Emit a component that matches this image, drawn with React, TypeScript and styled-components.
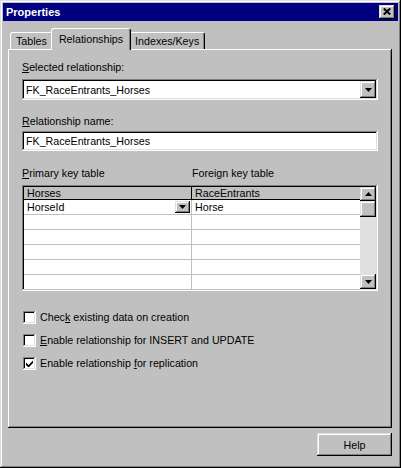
import React from 'react';
import styled, { createGlobalStyle } from 'styled-components';

const GlobalStyle = createGlobalStyle`
  html, body {
    margin: 0;
    padding: 0;
    background: #c0c0c0;
  }
  body {
    font-family: "Liberation Sans", Arial, sans-serif;
    font-size: 10.7px;
    color: #000;
  }
`;

const raised = `
  box-shadow: inset -1px -1px #000, inset 1px 1px #dfdfdf,
    inset -2px -2px #808080, inset 2px 2px #fff;
`;

const sunken = `
  box-shadow: inset -1px -1px #fff, inset 1px 1px #808080,
    inset -2px -2px #dfdfdf, inset 2px 2px #000;
`;

const Window = styled.div`
  width: 401px;
  height: 468px;
  box-sizing: border-box;
  padding: 3px;
  background: #c0c0c0;
  display: flex;
  flex-direction: column;
  ${raised}
`;

const TitleBar = styled.div`
  height: 18px;
  flex-shrink: 0;
  background: #000080;
  display: flex;
  align-items: center;
  justify-content: space-between;
  padding: 0 3px 0 3px;
`;

const Title = styled.span`
  color: #fff;
  font-weight: bold;
  font-size: 11px;
`;

const CloseButton = styled.div`
  width: 16px;
  height: 14px;
  box-sizing: border-box;
  background: #c0c0c0;
  display: flex;
  align-items: center;
  justify-content: center;
  padding: 0 1px 1px 0;
  ${raised}
`;

const Body = styled.div`
  flex: 1;
  min-height: 0;
  display: flex;
  flex-direction: column;
  padding: 7px 6px 0 5px;
`;

const TabRow = styled.div`
  position: relative;
  z-index: 1;
  height: 22px;
  display: flex;
  align-items: flex-end;
  padding-left: 2px;
  margin-bottom: -1px;
`;

const Tab = styled.div<{ $active?: boolean }>`
  height: ${p => (p.$active ? 22 : 17)}px;
  margin: ${p => (p.$active ? '0 -2px' : '0 0 1px')};
  padding: ${p => (p.$active ? '0 7px 2px' : '0 5px')};
  position: relative;
  z-index: ${p => (p.$active ? 2 : 1)};
  box-sizing: border-box;
  display: flex;
  align-items: center;
  background: #c0c0c0;
  border-top: 1px solid #fff;
  border-left: 1px solid #fff;
  border-right: 1px solid #000;
  border-radius: 3px 3px 0 0;
  box-shadow: inset -1px 0 #808080;
  white-space: nowrap;
`;

const Panel = styled.div`
  flex: 1;
  display: flex;
  flex-direction: column;
  padding: 12px 14px 0;
  box-shadow: inset -1px -1px #000, inset 1px 1px #fff, inset -2px -2px #808080;
`;

const FieldLabel = styled.div<{ $gap?: number }>`
  line-height: 13px;
  margin-top: ${p => p.$gap ?? 0}px;
  white-space: nowrap;
`;

const Combo = styled.div`
  margin-top: 5px;
  height: 21px;
  box-sizing: border-box;
  padding: 2px;
  background: #fff;
  display: flex;
  align-items: center;
  ${sunken}
`;

const FieldText = styled.span<{ $inset?: number }>`
  flex: 1;
  padding-left: ${p => p.$inset ?? 2}px;
  white-space: nowrap;
`;

const DropButton = styled.div<{ $w: number; $h: number }>`
  width: ${p => p.$w}px;
  height: ${p => p.$h}px;
  flex-shrink: 0;
  box-sizing: border-box;
  background: #c0c0c0;
  display: flex;
  align-items: center;
  justify-content: center;
  ${raised}
`;

const TextInput = styled.div`
  margin-top: 3px;
  height: 20px;
  box-sizing: border-box;
  padding: 0 4px;
  background: #fff;
  display: flex;
  align-items: center;
  white-space: nowrap;
  ${sunken}
`;

const ColumnLabels = styled.div`
  margin-top: 16px;
  display: grid;
  grid-template-columns: 170px 1fr;
  line-height: 13px;
`;

const GridFrame = styled.div`
  margin-top: 5px;
  height: 106px;
  box-sizing: border-box;
  padding: 2px;
  background: #fff;
  display: flex;
  overflow: hidden;
  ${sunken}
`;

const Table = styled.div`
  flex: 1;
  display: flex;
  flex-direction: column;
`;

const HeaderRow = styled.div`
  display: grid;
  grid-template-columns: 168px 1fr;
  height: 13px;
  box-sizing: border-box;
  background: #c0c0c0;
  border-bottom: 1px solid #000;
  flex-shrink: 0;
`;

const HeaderCell = styled.div<{ $divider?: boolean }>`
  padding-left: 3px;
  line-height: 13px;
  border-right: ${p => (p.$divider ? '1px solid #000' : 'none')};
  white-space: nowrap;
  overflow: hidden;
`;

const Row = styled.div`
  display: grid;
  grid-template-columns: 168px 1fr;
  height: 15px;
  box-sizing: border-box;
  border-bottom: 1px solid #c0c0c0;
  flex-shrink: 0;
`;

const Cell = styled.div<{ $divider?: boolean }>`
  display: flex;
  align-items: center;
  padding-left: 3px;
  padding-right: 1px;
  border-right: ${p => (p.$divider ? '1px solid #c0c0c0' : 'none')};
  white-space: nowrap;
  overflow: hidden;
`;

const Scrollbar = styled.div`
  width: 16px;
  flex-shrink: 0;
  display: flex;
  flex-direction: column;
  background: #e0e0e0;
`;

const ScrollPart = styled.div<{ $h: number }>`
  height: ${p => p.$h}px;
  flex-shrink: 0;
  box-sizing: border-box;
  background: #c0c0c0;
  display: flex;
  align-items: center;
  justify-content: center;
  ${raised}
`;

const Track = styled.div`
  flex: 1;
`;

const CheckRow = styled.div<{ $gap: number }>`
  margin-top: ${p => p.$gap}px;
  display: flex;
  align-items: center;
  gap: 4px;
  line-height: 13px;
  white-space: nowrap;
`;

const CheckBox = styled.div`
  width: 13px;
  height: 13px;
  margin-left: 1px;
  box-sizing: border-box;
  background: #fff;
  display: flex;
  align-items: center;
  justify-content: center;
  ${sunken}
`;

const Footer = styled.div`
  display: flex;
  justify-content: flex-end;
  padding: 5px 0 9px;
`;

const PushButton = styled.div`
  width: 75px;
  height: 23px;
  box-sizing: border-box;
  background: #c0c0c0;
  display: flex;
  align-items: center;
  justify-content: center;
  ${raised}
`;

const ArrowDown = () => (
  <svg width="7" height="4" viewBox="0 0 7 4">
    <path d="M0 0h7L3.5 4z" fill="#000" />
  </svg>
);

const ArrowUp = () => (
  <svg width="7" height="4" viewBox="0 0 7 4">
    <path d="M3.5 0L7 4H0z" fill="#000" />
  </svg>
);

const CloseGlyph = () => (
  <svg width="8" height="7" viewBox="0 0 8 7">
    <path d="M0.8 0.5L7.2 6.5M7.2 0.5L0.8 6.5" stroke="#000" strokeWidth="2" />
  </svg>
);

const CheckGlyph = () => (
  <svg width="7" height="7" viewBox="0 0 7 7">
    <path d="M0 2.5L2.5 5L7 0.5V3L2.5 7.5L0 5z" fill="#000" />
  </svg>
);

const emptyRows = [1, 2, 3, 4, 5];

export default function App() {
  return (
    <>
      <GlobalStyle />
      <Window>
        <TitleBar>
          <Title>Properties</Title>
          <CloseButton>
            <CloseGlyph />
          </CloseButton>
        </TitleBar>
        <Body>
          <TabRow>
            <Tab>Tables</Tab>
            <Tab $active>Relationships</Tab>
            <Tab>Indexes/Keys</Tab>
          </TabRow>
          <Panel>
            <FieldLabel>
              <u>S</u>elected relationship:
            </FieldLabel>
            <Combo>
              <FieldText>FK_RaceEntrants_Horses</FieldText>
              <DropButton $w={16} $h={17}>
                <ArrowDown />
              </DropButton>
            </Combo>

            <FieldLabel $gap={15}>
              <u>R</u>elationship name:
            </FieldLabel>
            <TextInput>FK_RaceEntrants_Horses</TextInput>

            <ColumnLabels>
              <span>
                <u>P</u>rimary key table
              </span>
              <span>Foreign key table</span>
            </ColumnLabels>
            <GridFrame>
              <Table>
                <HeaderRow>
                  <HeaderCell $divider>Horses</HeaderCell>
                  <HeaderCell>RaceEntrants</HeaderCell>
                </HeaderRow>
                <Row>
                  <Cell $divider>
                    <FieldText $inset={0}>HorseId</FieldText>
                    <DropButton $w={15} $h={12}>
                      <ArrowDown />
                    </DropButton>
                  </Cell>
                  <Cell>Horse</Cell>
                </Row>
                {emptyRows.map(r => (
                  <Row key={r}>
                    <Cell $divider />
                    <Cell />
                  </Row>
                ))}
              </Table>
              <Scrollbar>
                <ScrollPart $h={14}>
                  <ArrowUp />
                </ScrollPart>
                <ScrollPart $h={16} />
                <Track />
                <ScrollPart $h={15}>
                  <ArrowDown />
                </ScrollPart>
              </Scrollbar>
            </GridFrame>

            <CheckRow $gap={20}>
              <CheckBox />
              <span>
                Chec<u>k</u> existing data on creation
              </span>
            </CheckRow>
            <CheckRow $gap={10}>
              <CheckBox />
              <span>
                <u>E</u>nable relationship for INSERT and UPDATE
              </span>
            </CheckRow>
            <CheckRow $gap={10}>
              <CheckBox>
                <CheckGlyph />
              </CheckBox>
              <span>
                Enable relationship <u>f</u>or replication
              </span>
            </CheckRow>
          </Panel>
          <Footer>
            <PushButton>Help</PushButton>
          </Footer>
        </Body>
      </Window>
    </>
  );
}
